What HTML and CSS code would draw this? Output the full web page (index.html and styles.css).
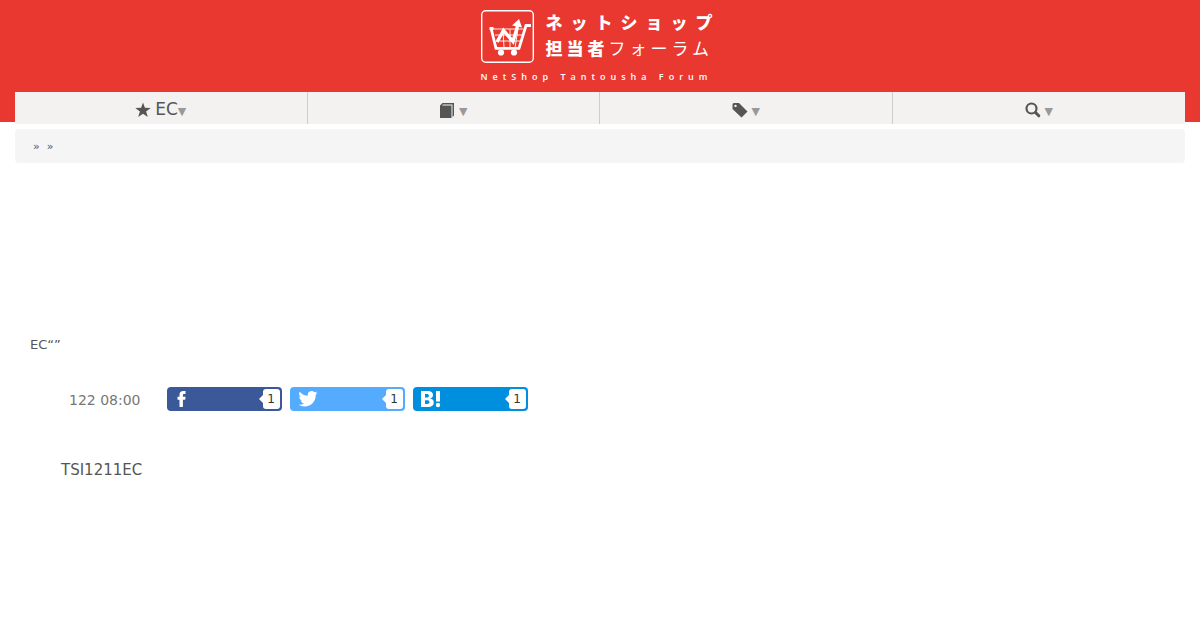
FILE: index.html
```html
<!DOCTYPE html>
<html lang="ja">
<head>
<meta charset="utf-8">
<meta name="viewport" content="width=device-width, initial-scale=1">
<title>ネットショップ担当者フォーラム</title>
<link rel="stylesheet" href="styles.css">
</head>
<body>
<header class="site-header">
  <a class="logo" href="#">
    <span class="logo-top">
      <svg class="logo-mark" width="53" height="53" viewBox="0 0 53 53" fill="none" stroke="#fff" aria-hidden="true">
        <rect x=".7" y=".7" width="51.600" height="51.600" rx="4" stroke-width="1.400"/>
        <path d="M8.500 18.500h4M10 18l5 20.300h23l7-22.800h5" stroke-width="2.800"/>
        <path d="M12 19h30M14 25h27M15 31h24M22 19l1 19M29 19v19M37 19l-3 19" stroke-width=".9"/>
        <path d="M16 32l6.500-11.500 9.500 11 5-17" stroke-width="3.400"/>
        <path d="M38 9l3 8.500-10-2z" fill="#fff" stroke="none"/>
        <circle cx="20" cy="42.500" r="3.100" fill="#fff" stroke="none"/>
        <circle cx="33" cy="42.500" r="3.100" fill="#fff" stroke="none"/>
      </svg>
      <span class="logo-name">
        <span class="logo-line logo-line-first">ネットショップ</span>
        <span class="logo-line"><b>担当者</b>フォーラム</span>
      </span>
    </span>
    <span class="logo-latin">NetShop Tantousha Forum</span>
  </a>
  <nav class="nav" aria-label="メニュー">
    <a class="nav-item" href="#">
      <svg class="nav-icon" width="16" height="16" viewBox="0 0 16 16" aria-hidden="true"><path d="M8 .5l1.900 5.300 5.800.1-4.600 3.500 1.700 5.600L8 11.700 3.200 15l1.700-5.600L.3 5.900l5.800-.1z"/></svg>
      <span class="nav-text">EC</span><span class="caret">▼</span>
    </a>
    <a class="nav-item" href="#" aria-label="連載">
      <svg class="nav-icon" width="16" height="16" viewBox="0 0 16 16" aria-hidden="true"><path d="M1 3.500L3.500 1H15v12.500L13.500 15V2.500H4L3 3.500h9.500V16H1z"/></svg>
      <span class="caret">▼</span>
    </a>
    <a class="nav-item" href="#" aria-label="タグ">
      <svg class="nav-icon" width="16" height="16" viewBox="0 0 16 16" aria-hidden="true"><path fill-rule="evenodd" d="M.5 2.500Q.5 1 2 1h5L15.500 9.500 9.500 15.500.5 7zM3.500 2.700a1.200 1.200 0 1 0 0 2.400 1.200 1.200 0 0 0 0-2.400z"/></svg>
      <span class="caret">▼</span>
    </a>
    <a class="nav-item" href="#" aria-label="検索">
      <svg class="nav-icon nav-icon-line" width="16" height="16" viewBox="0 0 16 16" aria-hidden="true"><circle cx="6.500" cy="6.500" r="5" stroke-width="2.200"/><path d="M10.500 10.500l3.300 3.300" stroke-width="3" stroke-linecap="round"/></svg>
      <span class="caret">▼</span>
    </a>
  </nav>
</header>
<main class="page">
  <div class="breadcrumb"><span>»</span><span>»</span></div>
  <p class="subtitle">EC“”</p>
  <div class="meta">
    <time class="date">122 08:00</time>
    <a class="share share-facebook" href="#" aria-label="Facebook">
      <svg width="16" height="18" viewBox="2 0 16 18" fill="#fff" aria-hidden="true"><path d="M6.500 17V9.800H4.500v-3h2V4.700C6.500 2.200 8 1 10.200 1h2.300v3h-1.400c-.9 0-1.200.4-1.200 1.200v1.600h2.700l-.4 3H9.900V17z"/></svg>
      <span class="count">1</span>
    </a>
    <a class="share share-twitter" href="#" aria-label="Twitter">
      <svg width="20" height="18" viewBox="0 -1 24 22" fill="#fff" aria-hidden="true"><path d="M23.500 2.500a9.600 9.600 0 0 1-2.700.8A4.700 4.700 0 0 0 22.900.7a9.500 9.500 0 0 1-3 1.100A4.800 4.800 0 0 0 11.600 5c0 .4 0 .8.100 1.100C7.800 5.900 4.200 4 1.900 1.100A4.800 4.800 0 0 0 3.400 7.500a4.700 4.700 0 0 1-2.200-.6v.1a4.800 4.800 0 0 0 3.900 4.700 4.800 4.800 0 0 1-2.200.1 4.800 4.800 0 0 0 4.500 3.300A9.600 9.600 0 0 1 .3 17a13.600 13.600 0 0 0 7.400 2.200c8.800 0 13.700-7.300 13.700-13.600v-.6a9.700 9.700 0 0 0 2.100-2.500z"/></svg>
      <span class="count">1</span>
    </a>
    <a class="share share-hatena" href="#" aria-label="はてなブックマーク">
      <svg width="20" height="18" viewBox="0 0 20 18" aria-hidden="true"><path fill="#fff" fill-rule="evenodd" d="M0 1h6.500c3.800 0 5.500 1.600 5.500 4 0 1.900-1 3.100-3 3.600 2.500.3 3.800 1.700 3.800 3.900 0 2.800-2 4.500-5.600 4.500H0zM4 4v3.500h1.700c1.500 0 2.200-.6 2.200-1.800S7.200 4 5.700 4zM4 10.300V14h2c1.700 0 2.500-.6 2.500-1.900 0-1.200-.8-1.800-2.500-1.800zM15 1h4v10.500h-4z"/><circle cx="17" cy="15" r="2.200" fill="#fff"/></svg>
      <span class="count">1</span>
    </a>
  </div>
  <p class="lead">TSI1211EC</p>
</main>
</body>
</html>
```
FILE: styles.css
```css
* {
  box-sizing: border-box;
}

body {
  margin: 0;
  background: #fff;
  color: #555;
  font-family: "DejaVu Sans", "Noto Sans CJK JP", sans-serif;
}

a {
  color: inherit;
  text-decoration: none;
}

.site-header {
  display: flex;
  flex-direction: column;
  align-items: center;
  padding: 10px 15px 0;
  background: linear-gradient(to top, #fff 2px, #e93830 2px);
}

.logo {
  display: flex;
  flex-direction: column;
  width: 239px;
  height: 82px;
  color: #fff;
}

.logo-top {
  display: flex;
  gap: 12px;
}

.logo-mark {
  flex: none;
}

.logo-name {
  display: flex;
  flex-direction: column;
  justify-content: center;
  height: 50px;
  font-family: "Noto Sans CJK JP", sans-serif;
  white-space: nowrap;
}

.logo-line {
  font-size: 17px;
  line-height: 26px;
  letter-spacing: 4px;
}

.logo-line b {
  font-weight: 900;
}

.logo-line-first {
  font-weight: 900;
  letter-spacing: 8px;
}

.logo-latin {
  padding-top: 6px;
  font-family: "Open Sans", sans-serif;
  font-size: 9px;
  font-weight: 600;
  line-height: 16px;
  letter-spacing: 5px;
  white-space: nowrap;
}

.nav {
  display: grid;
  grid-template-columns: repeat(4, 1fr);
  width: 100%;
}

.nav-item {
  display: flex;
  align-items: center;
  justify-content: center;
  gap: 4px;
  height: 32px;
  padding-top: 5px;
  border-right: 1px solid #ccc;
  background: #f3f2f1;
  font-size: 17px;
  line-height: 24px;
}

.nav-item:last-child {
  border-right: 0;
}

.nav-icon {
  margin-bottom: 1px;
  fill: #555;
}

.nav-icon-line {
  fill: none;
  stroke: #555;
}

.nav-text {
  margin-right: -4px;
  padding-bottom: 4px;
}

.caret {
  padding-top: 2px;
  color: #999;
  font-size: 11px;
}

.page {
  padding: 5px 15px 0;
}

.breadcrumb {
  display: flex;
  gap: 7px;
  padding: 1px 18px 0;
  border-radius: 4px;
  background: #f5f5f5;
  font-size: 11px;
  line-height: 33px;
}

.subtitle {
  margin: 172px 15px 0;
  font-size: 13px;
  line-height: 20px;
}

.meta {
  display: flex;
  align-items: center;
  gap: 8px;
  margin-top: 32px;
  padding-left: 54px;
}

.date {
  margin-right: 18px;
  padding-top: 2px;
  color: #777;
  font-size: 14px;
}

.share {
  display: flex;
  align-items: center;
  justify-content: space-between;
  width: 115px;
  height: 24px;
  padding: 0 2px 0 8px;
  border-radius: 4px;
}

.share-facebook {
  background: #3b5998;
}

.share-twitter {
  background: #55acff;
}

.share-hatena {
  background: #008fde;
}

.count {
  position: relative;
  width: 17px;
  border-radius: 3px;
  background: #fff;
  color: #333;
  font-size: 12px;
  line-height: 20px;
  text-align: center;
}

.count::before {
  content: "";
  position: absolute;
  top: 6px;
  left: -4px;
  border: 4px solid transparent;
  border-left: 0;
  border-right-color: #fff;
}

.lead {
  margin: 47px 46px 0;
  font-size: 15px;
  line-height: 24px;
}
```
